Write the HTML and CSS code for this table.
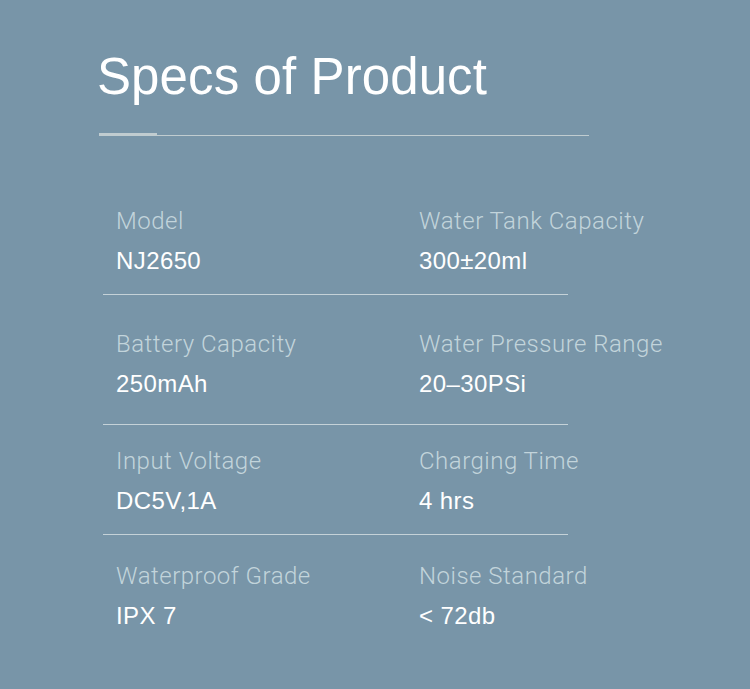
FILE: index.html
```html
<!DOCTYPE html>
<html lang="en">
<head>
<meta charset="utf-8">
<title>Specs of Product</title>
<link rel="stylesheet" href="styles.css">
</head>
<body>
<main class="page">
  <h1 class="title">Specs of Product</h1>
  <div class="underline"><span class="underline-thick"></span><span class="underline-thin"></span></div>
  <section class="specs">
    <div class="row row-1">
      <div class="cell"><div class="label">Model</div><div class="value">NJ2650</div></div>
      <div class="cell cell-right"><div class="label">Water Tank Capacity</div><div class="value">300±20ml</div></div>
    </div>
    <div class="row row-2">
      <div class="cell"><div class="label">Battery Capacity</div><div class="value">250mAh</div></div>
      <div class="cell cell-right"><div class="label">Water Pressure Range</div><div class="value">20–30PSi</div></div>
    </div>
    <div class="row row-3">
      <div class="cell"><div class="label">Input Voltage</div><div class="value">DC5V,1A</div></div>
      <div class="cell cell-right"><div class="label">Charging Time</div><div class="value">4 hrs</div></div>
    </div>
    <div class="row row-4">
      <div class="cell"><div class="label">Waterproof Grade</div><div class="value">IPX 7</div></div>
      <div class="cell cell-right"><div class="label">Noise Standard</div><div class="value">&lt; 72db</div></div>
    </div>
  </section>
</main>
</body>
</html>
```

FILE: styles.css
```css
html, body {
  margin: 0;
  padding: 0;
}
body {
  background: #7895a8;
  width: 750px;
  height: 689px;
  overflow: hidden;
  font-family: "Liberation Sans", Arial, sans-serif;
}
.page {
  padding: 52px 0 0 97px;
}
.title {
  margin: 0;
  font-size: 51px;
  line-height: 50px;
  font-weight: 400;
  letter-spacing: 0.1px;
  color: #ffffff;
}
.underline {
  display: flex;
  align-items: flex-end;
  width: 490px;
  margin: 31px 0 0 2px;
}
.underline-thick {
  width: 58px;
  height: 3px;
  background: #c0ccd0;
}
.underline-thin {
  flex: 1;
  height: 1px;
  background: #c0ccd0;
}
.specs {
  margin-left: 6px;
  width: 465px;
  padding-top: 65px;
}
.row {
  display: flex;
  border-bottom: 1px solid #c5d2d8;
}
.row-1 { padding-top: 0; padding-bottom: 13px; }
.row-2 { padding-top: 29px; padding-bottom: 20px; }
.row-3 { padding-top: 16px; padding-bottom: 13px; }
.row-4 { padding-top: 21px; border-bottom: none; }
.cell {
  width: 316px;
  flex: none;
  padding-left: 13px;
  box-sizing: border-box;
  white-space: nowrap;
}
.cell-right {
  width: auto;
  padding-left: 0;
}
.label {
  font-family: "Roboto", "Liberation Sans", sans-serif;
  font-weight: 300;
  font-size: 24px;
  letter-spacing: 0.5px;
  line-height: 40px;
  color: #c2d4db;
}
.value {
  font-size: 24px;
  letter-spacing: 0.4px;
  line-height: 40px;
  color: #ffffff;
}
```
